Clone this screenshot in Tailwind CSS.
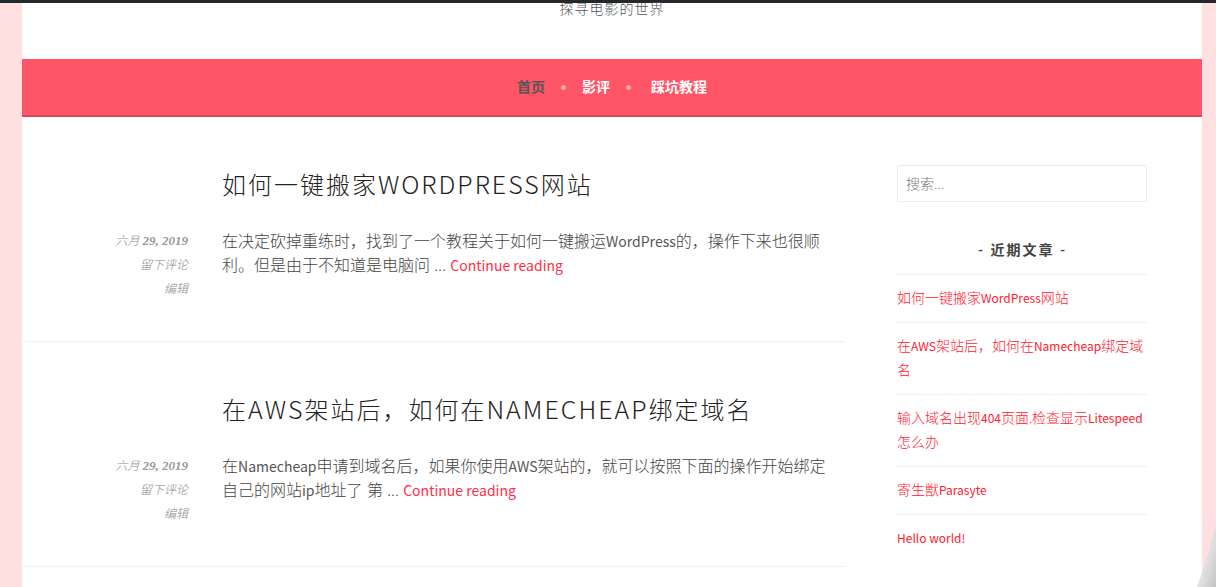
<!DOCTYPE html>
<html lang="zh-CN">
<head>
<meta charset="utf-8">
<meta name="viewport" content="width=device-width, initial-scale=1">
<title>探寻电影的世界</title>
<script src="https://cdn.jsdelivr.net/npm/@tailwindcss/browser@4"></script>
</head>
<body class="relative flex min-h-screen flex-col overflow-x-hidden bg-[#ffdfe0] font-['Lato','Noto_Sans_CJK_SC',sans-serif] text-base leading-6 font-light text-[#444340]">
<div class="h-[3px] shrink-0 bg-[#23282d]"></div>
<div class="mr-3.5 ml-[22px] flex-1 bg-white">
  <header class="h-14 text-center text-sm leading-3 font-light tracking-[1px] text-[#555]">
    <p>探寻电影的世界</p>
  </header>
  <nav class="flex h-[58px] items-center justify-center gap-4 border-b-2 border-[#d94554] bg-[#ff5566] text-sm font-bold text-white">
    <a href="#" class="text-[#555]">首页</a>
    <span class="size-[5px] rounded-full bg-[#ffaab3]"></span>
    <a href="#">影评</a>
    <span class="mr-1 size-[5px] rounded-full bg-[#ffaab3]"></span>
    <a href="#">踩坑教程</a>
  </nav>
  <div class="flex">
    <main class="min-w-0 flex-1">
      <article class="border-b border-[#f1f1f1] pt-12 pr-4 pb-10">
        <h2 class="ml-[200px] font-['Noto_Sans','Noto_Sans_CJK_SC',sans-serif] text-2xl leading-10 font-extralight tracking-[2px] text-[#222] uppercase"><a href="#">如何一键搬家<span class="font-['Noto_Sans_CJK_SC',sans-serif] text-[25px] leading-none">WordPress</span>网站</a></h2>
        <div class="mt-6 flex">
          <div class="flex w-[166px] shrink-0 flex-col text-right font-['Liberation_Serif','Noto_Sans_CJK_SC',serif] text-xs leading-6 text-[#888] italic">
            <a href="#">六月 <span class="text-[13px] leading-none font-bold text-[#999]">29, 2019</span></a>
            <a href="#">留下评论</a>
            <a href="#">编辑</a>
          </div>
          <p class="ml-[34px]">在决定砍掉重练时，找到了一个教程关于如何一键搬运<span class="font-['Noto_Sans_CJK_SC',sans-serif] text-sm leading-none font-normal text-[#555]">WordPress</span>的，操作下来也很顺利。但是由于不知道是电脑问 … <a href="#" class="font-['Noto_Sans_CJK_SC',sans-serif] text-sm leading-none font-normal text-[#ff2f48]">Continue reading</a></p>
        </div>
      </article>
      <article class="border-b border-[#f1f1f1] pt-12 pr-4 pb-10">
        <h2 class="ml-[200px] font-['Noto_Sans','Noto_Sans_CJK_SC',sans-serif] text-2xl leading-10 font-extralight tracking-[2px] text-[#222] uppercase"><a href="#">在<span class="font-['Noto_Sans_CJK_SC',sans-serif] text-[25px] leading-none">AWS</span>架站后，如何在<span class="font-['Noto_Sans_CJK_SC',sans-serif] text-[25px] leading-none">Namecheap</span>绑定域名</a></h2>
        <div class="mt-6 flex">
          <div class="flex w-[166px] shrink-0 flex-col text-right font-['Liberation_Serif','Noto_Sans_CJK_SC',serif] text-xs leading-6 text-[#888] italic">
            <a href="#">六月 <span class="text-[13px] leading-none font-bold text-[#999]">29, 2019</span></a>
            <a href="#">留下评论</a>
            <a href="#">编辑</a>
          </div>
          <p class="ml-[34px]">在<span class="font-['Noto_Sans_CJK_SC',sans-serif] text-sm leading-none font-normal text-[#555]">Namecheap</span>申请到域名后，如果你使用<span class="font-['Noto_Sans_CJK_SC',sans-serif] text-sm leading-none font-normal text-[#555]">AWS</span>架站的，就可以按照下面的操作开始绑定自己的网站<span class="font-['Noto_Sans_CJK_SC',sans-serif] text-sm leading-none font-normal text-[#555]">ip</span>地址了 第 … <a href="#" class="font-['Noto_Sans_CJK_SC',sans-serif] text-sm leading-none font-normal text-[#ff2f48]">Continue reading</a></p>
        </div>
      </article>
    </main>
    <aside class="mr-[54px] ml-[52px] w-[251px] shrink-0 pt-12 text-sm leading-6">
      <form><input type="search" aria-label="搜索" placeholder="搜索…" class="block h-[37px] w-[250px] rounded-xs border border-[#eaeaea] px-2 text-sm font-light placeholder:text-[#777]"></form>
      <h3 class="mt-9 mb-3 text-center font-bold tracking-[2px]">- 近期文章 -</h3>
      <ul class="text-[#ff2030]">
        <li class="border-t border-[#f1f1f1] pt-[11px] pb-3"><a href="#">如何一键搬家<span class="font-['Noto_Sans_CJK_SC',sans-serif] text-xs leading-none font-normal">WordPress</span>网站</a></li>
        <li class="border-t border-[#f1f1f1] pt-[11px] pb-3"><a href="#">在<span class="font-['Noto_Sans_CJK_SC',sans-serif] text-xs leading-none font-normal">AWS</span>架站后，如何在<span class="font-['Noto_Sans_CJK_SC',sans-serif] text-xs leading-none font-normal">Namecheap</span>绑定域名</a></li>
        <li class="border-t border-[#f1f1f1] pt-[11px] pb-3"><a href="#">输入域名出现<span class="font-['Noto_Sans_CJK_SC',sans-serif] text-xs leading-none font-normal">404</span>页面,检查显示<span class="font-['Noto_Sans_CJK_SC',sans-serif] text-xs leading-none font-normal">Litespeed</span>怎么办</a></li>
        <li class="border-t border-[#f1f1f1] pt-[11px] pb-3"><a href="#">寄生獣<span class="font-['Noto_Sans_CJK_SC',sans-serif] text-xs leading-none font-normal">Parasyte</span></a></li>
        <li class="border-t border-[#f1f1f1] pt-[11px] pb-3"><a href="#" class="font-['Noto_Sans_CJK_SC',sans-serif] text-xs leading-none font-normal">Hello world!</a></li>
      </ul>
    </aside>
  </div>
</div>
<svg class="fixed right-0 bottom-0 h-16 w-[19px]" viewBox="0 0 19 64" aria-hidden="true">
  <defs><linearGradient id="curl" x1="0" y1="0" x2="1" y2="1"><stop offset="0.2" stop-color="#eeeeee"/><stop offset="0.6" stop-color="#dedede"/><stop offset="1" stop-color="#c4c4c4"/></linearGradient></defs>
  <path d="M19 0C16 14 9 40 0 64H19Z" fill="url(#curl)"/>
</svg>
</body>
</html>
